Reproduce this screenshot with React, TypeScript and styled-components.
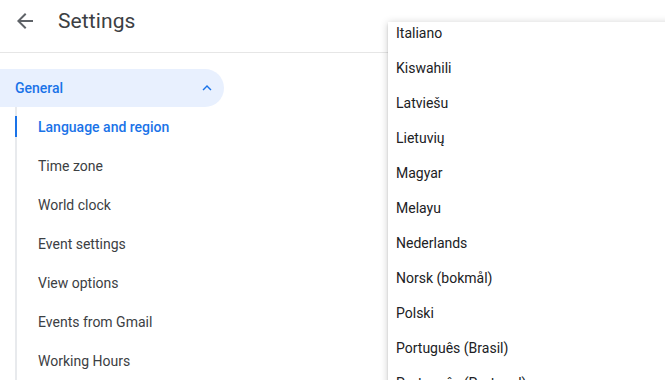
import React from "react";
import styled, { createGlobalStyle } from "styled-components";

const Global = createGlobalStyle`
  html, body { margin: 0; padding: 0; background: #fff; }
  body { font-family: Roboto, "Liberation Sans", Arial, sans-serif; overflow: hidden; }
  * { box-sizing: border-box; }
`;

const Page = styled.div`
  position: relative;
  width: 665px;
  height: 380px;
  overflow: hidden;
  background: #fff;
`;

const Header = styled.header`
  height: 53px;
  display: flex;
  align-items: center;
  padding: 0 0 10px 13px;
  border-bottom: 1px solid #e6e6e6;
`;

const BackButton = styled.button`
  width: 24px;
  height: 24px;
  padding: 0;
  border: none;
  background: none;
  display: flex;
  align-items: center;
  justify-content: center;
  color: #5f6368;
  cursor: pointer;
`;

const Title = styled.h1`
  margin: 0 0 0 21px;
  font-family: Roboto, "Liberation Sans", Arial, sans-serif;
  font-weight: 400;
  font-size: 21px;
  color: #3c4043;
  letter-spacing: 0.1px;
`;

const Sidebar = styled.nav`
  width: 224px;
  padding-top: 16px;
`;

const SectionPill = styled.div`
  height: 38px;
  display: flex;
  align-items: center;
  justify-content: space-between;
  padding: 0 8px 0 15px;
  background: #e8f0fe;
  border-radius: 0 19px 19px 0;
  color: #1a73e8;
  font-size: 14px;
  font-weight: 500;
`;

const SubList = styled.ul`
  list-style: none;
  margin: 0 0 0 15px;
  padding: 0;
  border-left: 2px solid #e8eaed;
  min-height: 300px;
`;

const SubItem = styled.li<{ $active?: boolean }>`
  position: relative;
  height: 39px;
  display: flex;
  align-items: center;
  padding-left: 21px;
  font-size: 14px;
  font-weight: ${(p) => (p.$active ? 500 : 400)};
  color: ${(p) => (p.$active ? "#1a73e8" : "#3c4043")};
  &::before {
    content: "";
    display: ${(p) => (p.$active ? "block" : "none")};
    position: absolute;
    left: -2px;
    top: 9px;
    width: 2px;
    height: 21px;
    background: #1a73e8;
  }
`;

const Menu = styled.div`
  position: absolute;
  left: 388px;
  top: 22px;
  width: 300px;
  bottom: -20px;
  background: #fff;
  overflow: hidden;
  box-shadow: 0 2px 2px 0 rgba(0, 0, 0, 0.14), 0 3px 1px -2px rgba(0, 0, 0, 0.12),
    0 1px 8px 0 rgba(0, 0, 0, 0.2);
`;

const MenuList = styled.ul`
  list-style: none;
  margin: -7px 0 0 0;
  padding: 0;
`;

const MenuItem = styled.li`
  height: 35px;
  display: flex;
  align-items: center;
  padding-left: 8px;
  font-size: 14px;
  color: #202124;
  white-space: nowrap;
`;

const sections = [
  "Language and region",
  "Time zone",
  "World clock",
  "Event settings",
  "View options",
  "Events from Gmail",
  "Working Hours",
];

const languages = [
  "Italiano",
  "Kiswahili",
  "Latviešu",
  "Lietuvių",
  "Magyar",
  "Melayu",
  "Nederlands",
  "Norsk (bokmål)",
  "Polski",
  "Português (Brasil)",
  "Português (Portugal)",
];

export default function App() {
  return (
    <Page>
      <Global />
      <Header>
        <BackButton aria-label="Back">
          <svg width="24" height="24" viewBox="0 0 24 24" fill="currentColor">
            <path d="M20 11H7.83l5.59-5.59L12 4l-8 8 8 8 1.41-1.41L7.83 13H20v-2z" />
          </svg>
        </BackButton>
        <Title>Settings</Title>
      </Header>
      <Sidebar>
        <SectionPill>
          <span>General</span>
          <svg width="18" height="18" viewBox="0 0 24 24" fill="#1a73e8">
            <path d="M12 8l-6 6 1.41 1.41L12 10.83l4.59 4.58L18 14z" />
          </svg>
        </SectionPill>
        <SubList>
          {sections.map((s, i) => (
            <SubItem key={s} $active={i === 0}>
              {s}
            </SubItem>
          ))}
        </SubList>
      </Sidebar>
      <Menu>
        <MenuList>
          {languages.map((l) => (
            <MenuItem key={l}>{l}</MenuItem>
          ))}
        </MenuList>
      </Menu>
    </Page>
  );
}
